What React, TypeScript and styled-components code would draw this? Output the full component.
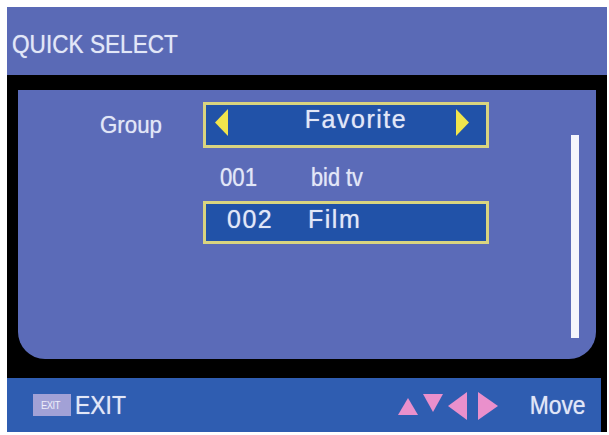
import React from "react";
import styled, { createGlobalStyle } from "styled-components";

const Global = createGlobalStyle`
  html, body { margin: 0; padding: 0; background: #ffffff; }
  body { font-family: "Liberation Sans", Arial, sans-serif; }
`;

const TEXT = "#e2e7f7";
const GLOW = "0 0 1px rgba(226, 231, 247, 0.7)";

const Frame = styled.div`
  margin: 7px 0 0 7px;
  width: 600px;
  height: 425px;
  display: flex;
  flex-direction: column;
  background: #000;
`;

const Header = styled.div`
  height: 68px;
  flex: 0 0 68px;
  background: #5a6ab6;
  display: flex;
  align-items: center;
  padding-left: 5px;
  box-sizing: border-box;
`;

const Narrow = styled.span<{ $scale: number; $origin?: string }>`
  display: inline-block;
  transform: scaleX(${(p) => p.$scale});
  transform-origin: ${(p) => p.$origin ?? "left"} center;
  white-space: nowrap;
`;

const Title = styled(Narrow)`
  font-size: 26px;
  line-height: 26px;
  color: ${TEXT};
  text-shadow: ${GLOW};
  margin-top: 6px;
`;

const Body = styled.div`
  height: 303px;
  flex: 0 0 303px;
  box-sizing: border-box;
  padding: 15px 11px 19px 11px;
  display: flex;
`;

const Panel = styled.div`
  flex: 1;
  background: #5b6bb8;
  border-radius: 0 0 27px 27px;
  display: flex;
  padding-top: 12px;
  box-sizing: border-box;
`;

const Content = styled.div`
  width: 553px;
  display: flex;
  flex-direction: column;
`;

const GroupRow = styled.div`
  display: flex;
  align-items: center;
  height: 46px;
`;

const Label = styled.div`
  width: 185px;
  padding-left: 82px;
  box-sizing: border-box;
  font-size: 24px;
  line-height: 24px;
  color: ${TEXT};
  text-shadow: ${GLOW};
`;

const SelectBox = styled.div`
  width: 286px;
  height: 46px;
  box-sizing: border-box;
  border: 3px solid #d9d47f;
  background: #2152a8;
  display: flex;
  align-items: center;
  padding: 0 17px 6px 9px;
`;

const SelectText = styled.div`
  flex: 1;
  text-align: center;
  padding-left: 28px;
  font-size: 25px;
  line-height: 25px;
  letter-spacing: 1.5px;
  color: ${TEXT};
  text-shadow: ${GLOW};
  margin-top: -6px;
`;

const ChannelRow = styled.div<{ $selected?: boolean }>`
  margin-left: 185px;
  width: 286px;
  height: ${(p) => (p.$selected ? 43 : 53)}px;
  box-sizing: border-box;
  display: flex;
  align-items: center;
  border: ${(p) => (p.$selected ? "3px solid #d9d47f" : "none")};
  background: ${(p) => (p.$selected ? "#2152a8" : "transparent")};
  padding-left: ${(p) => (p.$selected ? 21 : 17)}px;
  padding-top: ${(p) => (p.$selected ? 0 : 5)}px;
  padding-bottom: ${(p) => (p.$selected ? 6 : 0)}px;
  font-size: 25px;
  line-height: 25px;
  color: ${TEXT};
  text-shadow: ${GLOW};
  letter-spacing: ${(p) => (p.$selected ? "1.5px" : "0")};
`;

const Num = styled.div<{ $w: number }>`
  width: ${(p) => p.$w}px;
  flex: 0 0 auto;
`;

const Scroll = styled.div`
  width: 8px;
  height: 203px;
  margin-top: 33px;
  background: #f4f5fc;
`;

const Footer = styled.div`
  height: 54px;
  flex: 0 0 54px;
  margin-right: 6px;
  background: #2f5db1;
  display: flex;
  align-items: center;
  padding: 0 15px 0 26px;
  box-sizing: border-box;
`;

const Badge = styled.div`
  width: 38px;
  height: 22px;
  background: #a2a1d6;
  color: #eeeefb;
  font-size: 11px;
  display: flex;
  align-items: center;
  justify-content: center;
  letter-spacing: -0.5px;
`;

const FootText = styled(Narrow)`
  font-size: 26px;
  line-height: 26px;
  color: ${TEXT};
  text-shadow: ${GLOW};
`;

const ExitText = styled(FootText)`
  margin-left: 4px;
`;

const Arrows = styled.svg`
  margin-left: auto;
  margin-right: 24px;
  flex: 0 0 auto;
`;

const YellowArrow = ({ dir }: { dir: "left" | "right" }) => (
  <svg width="13" height="27" viewBox="0 0 13 27">
    {dir === "left" ? (
      <polygon points="0,13.5 13,0 13,27" fill="#f1e54c" />
    ) : (
      <polygon points="0,0 13,13.5 0,27" fill="#f1e54c" />
    )}
  </svg>
);

export default function App() {
  return (
    <>
      <Global />
      <Frame>
        <Header>
          <Title $scale={0.87}>QUICK SELECT</Title>
        </Header>
        <Body>
          <Panel>
            <Content>
              <GroupRow>
                <Label>
                  <Narrow $scale={0.93}>Group</Narrow>
                </Label>
                <SelectBox>
                  <YellowArrow dir="left" />
                  <SelectText>Favorite</SelectText>
                  <YellowArrow dir="right" />
                </SelectBox>
              </GroupRow>
              <ChannelRow>
                <Num $w={91}>
                  <Narrow $scale={0.89}>001</Narrow>
                </Num>
                <Narrow $scale={0.87}>bid tv</Narrow>
              </ChannelRow>
              <ChannelRow $selected>
                <Num $w={81}>002</Num>
                <span>Film</span>
              </ChannelRow>
            </Content>
            <Scroll />
          </Panel>
        </Body>
        <Footer>
          <Badge>
            <Narrow $scale={0.85}>EXIT</Narrow>
          </Badge>
          <ExitText $scale={0.88}>EXIT</ExitText>
          <Arrows width="100" height="32" viewBox="0 0 100 32">
            <polygon points="0,26 20,26 10,9" fill="#ea90cc" />
            <polygon points="25,5 45,5 35,23" fill="#ea90cc" />
            <polygon points="50,17 69,3 69,31" fill="#ea90cc" />
            <polygon points="80,3 80,31 100,17" fill="#ea90cc" />
          </Arrows>
          <FootText $scale={0.88} $origin="right">
            Move
          </FootText>
        </Footer>
      </Frame>
    </>
  );
}
